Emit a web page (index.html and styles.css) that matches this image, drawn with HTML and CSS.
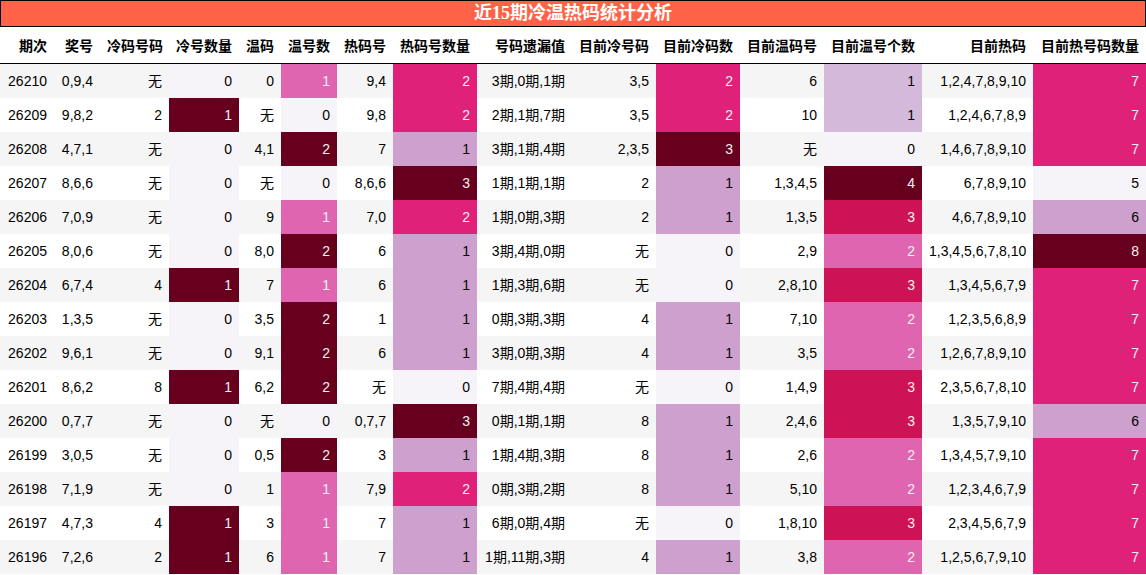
FILE: index.html
```html
<!DOCTYPE html>
<html lang="zh">
<head>
<meta charset="utf-8">
<title>近15期冷温热码统计分析</title>
<link rel="stylesheet" href="styles.css">
</head>
<body>
<div class="title">近15期冷温热码统计分析</div>
<table class="stats">
<colgroup>
<col class="w54"><col class="w46"><col class="w69"><col class="w70"><col class="w42"><col class="w56"><col class="w56"><col class="w84"><col class="w95"><col class="w84"><col class="w84"><col class="w84"><col class="w98"><col class="w111"><col class="w113">
</colgroup>
<thead>
<tr><th>期次</th><th>奖号</th><th>冷码号码</th><th>冷号数量</th><th>温码</th><th>温号数</th><th>热码号</th><th>热码号数量</th><th>号码遗漏值</th><th>目前冷号码</th><th>目前冷码数</th><th>目前温码号</th><th>目前温号个数</th><th>目前热码</th><th>目前热号码数量</th></tr>
</thead>
<tbody>
<tr><td>26210</td><td>0,9,4</td><td>无</td><td class="g0">0</td><td>0</td><td class="g12">1</td><td>9,4</td><td class="g23">2</td><td>3期,0期,1期</td><td>3,5</td><td class="g23">2</td><td>6</td><td class="g14">1</td><td>1,2,4,7,8,9,10</td><td class="g23">7</td></tr>
<tr><td>26209</td><td>9,8,2</td><td>2</td><td class="gmax">1</td><td>无</td><td class="g0">0</td><td>9,8</td><td class="g23">2</td><td>2期,1期,7期</td><td>3,5</td><td class="g23">2</td><td>10</td><td class="g14">1</td><td>1,2,4,6,7,8,9</td><td class="g23">7</td></tr>
<tr><td>26208</td><td>4,7,1</td><td>无</td><td class="g0">0</td><td>4,1</td><td class="gmax">2</td><td>7</td><td class="g13">1</td><td>3期,1期,4期</td><td>2,3,5</td><td class="gmax">3</td><td>无</td><td class="g0">0</td><td>1,4,6,7,8,9,10</td><td class="g23">7</td></tr>
<tr><td>26207</td><td>8,6,6</td><td>无</td><td class="g0">0</td><td>无</td><td class="g0">0</td><td>8,6,6</td><td class="gmax">3</td><td>1期,1期,1期</td><td>2</td><td class="g13">1</td><td>1,3,4,5</td><td class="gmax">4</td><td>6,7,8,9,10</td><td class="g0">5</td></tr>
<tr><td>26206</td><td>7,0,9</td><td>无</td><td class="g0">0</td><td>9</td><td class="g12">1</td><td>7,0</td><td class="g23">2</td><td>1期,0期,3期</td><td>2</td><td class="g13">1</td><td>1,3,5</td><td class="g34">3</td><td>4,6,7,8,9,10</td><td class="g13">6</td></tr>
<tr><td>26205</td><td>8,0,6</td><td>无</td><td class="g0">0</td><td>8,0</td><td class="gmax">2</td><td>6</td><td class="g13">1</td><td>3期,4期,0期</td><td>无</td><td class="g0">0</td><td>2,9</td><td class="g12">2</td><td>1,3,4,5,6,7,8,10</td><td class="gmax">8</td></tr>
<tr><td>26204</td><td>6,7,4</td><td>4</td><td class="gmax">1</td><td>7</td><td class="g12">1</td><td>6</td><td class="g13">1</td><td>1期,3期,6期</td><td>无</td><td class="g0">0</td><td>2,8,10</td><td class="g34">3</td><td>1,3,4,5,6,7,9</td><td class="g23">7</td></tr>
<tr><td>26203</td><td>1,3,5</td><td>无</td><td class="g0">0</td><td>3,5</td><td class="gmax">2</td><td>1</td><td class="g13">1</td><td>0期,3期,3期</td><td>4</td><td class="g13">1</td><td>7,10</td><td class="g12">2</td><td>1,2,3,5,6,8,9</td><td class="g23">7</td></tr>
<tr><td>26202</td><td>9,6,1</td><td>无</td><td class="g0">0</td><td>9,1</td><td class="gmax">2</td><td>6</td><td class="g13">1</td><td>3期,0期,3期</td><td>4</td><td class="g13">1</td><td>3,5</td><td class="g12">2</td><td>1,2,6,7,8,9,10</td><td class="g23">7</td></tr>
<tr><td>26201</td><td>8,6,2</td><td>8</td><td class="gmax">1</td><td>6,2</td><td class="gmax">2</td><td>无</td><td class="g0">0</td><td>7期,4期,4期</td><td>无</td><td class="g0">0</td><td>1,4,9</td><td class="g34">3</td><td>2,3,5,6,7,8,10</td><td class="g23">7</td></tr>
<tr><td>26200</td><td>0,7,7</td><td>无</td><td class="g0">0</td><td>无</td><td class="g0">0</td><td>0,7,7</td><td class="gmax">3</td><td>0期,1期,1期</td><td>8</td><td class="g13">1</td><td>2,4,6</td><td class="g34">3</td><td>1,3,5,7,9,10</td><td class="g13">6</td></tr>
<tr><td>26199</td><td>3,0,5</td><td>无</td><td class="g0">0</td><td>0,5</td><td class="gmax">2</td><td>3</td><td class="g13">1</td><td>1期,4期,3期</td><td>8</td><td class="g13">1</td><td>2,6</td><td class="g12">2</td><td>1,3,4,5,7,9,10</td><td class="g23">7</td></tr>
<tr><td>26198</td><td>7,1,9</td><td>无</td><td class="g0">0</td><td>1</td><td class="g12">1</td><td>7,9</td><td class="g23">2</td><td>0期,3期,2期</td><td>8</td><td class="g13">1</td><td>5,10</td><td class="g12">2</td><td>1,2,3,4,6,7,9</td><td class="g23">7</td></tr>
<tr><td>26197</td><td>4,7,3</td><td>4</td><td class="gmax">1</td><td>3</td><td class="g12">1</td><td>7</td><td class="g13">1</td><td>6期,0期,4期</td><td>无</td><td class="g0">0</td><td>1,8,10</td><td class="g34">3</td><td>2,3,4,5,6,7,9</td><td class="g23">7</td></tr>
<tr><td>26196</td><td>7,2,6</td><td>2</td><td class="gmax">1</td><td>6</td><td class="g12">1</td><td>7</td><td class="g13">1</td><td>1期,11期,3期</td><td>4</td><td class="g13">1</td><td>3,8</td><td class="g12">2</td><td>1,2,5,6,7,9,10</td><td class="g23">7</td></tr>
</tbody>
</table>
</body>
</html>
```
FILE: styles.css
```css
html, body {
  margin: 0;
  padding: 0;
  background: #ffffff;
}

.title {
  box-sizing: border-box;
  width: 1146px;
  height: 27px;
  line-height: 25px;
  border: 1px solid #000000;
  background: #ff6347;
  color: #ffffff;
  font-family: "Liberation Serif", "Noto Sans CJK SC", serif;
  font-weight: bold;
  font-size: 18px;
  text-align: center;
}

.stats {
  width: 1146px;
  table-layout: fixed;
  border-collapse: collapse;
  border-spacing: 0;
  font-family: "Liberation Sans", "Noto Sans CJK SC", sans-serif;
  font-size: 14px;
  color: #000000;
}

.stats th,
.stats td {
  padding: 7px 7px;
  line-height: 20px;
  text-align: right;
  white-space: nowrap;
  border: none;
}

.stats th {
  font-weight: bold;
  padding-top: 9px;
  padding-bottom: 7px;
}

.stats thead tr {
  border-bottom: 1px solid #000000;
}

.stats tbody tr:nth-child(odd) {
  background: #f5f5f5;
}

.w42 { width: 42px; }
.w46 { width: 46px; }
.w54 { width: 54px; }
.w56 { width: 56px; }
.w69 { width: 69px; }
.w70 { width: 70px; }
.w84 { width: 84px; }
.w95 { width: 95px; }
.w98 { width: 98px; }
.w111 { width: 111px; }
.w113 { width: 113px; }

.g0 { background: #f7f4f9; color: #000000; }
.g13 { background: #cda0cd; color: #000000; }
.g14 { background: #d4b9da; color: #000000; }
.g12 { background: #df65b0; color: #f1f1f1; }
.g23 { background: #df2179; color: #f1f1f1; }
.g34 { background: #ce1256; color: #f1f1f1; }
.gmax { background: #67001f; color: #f1f1f1; }
```
